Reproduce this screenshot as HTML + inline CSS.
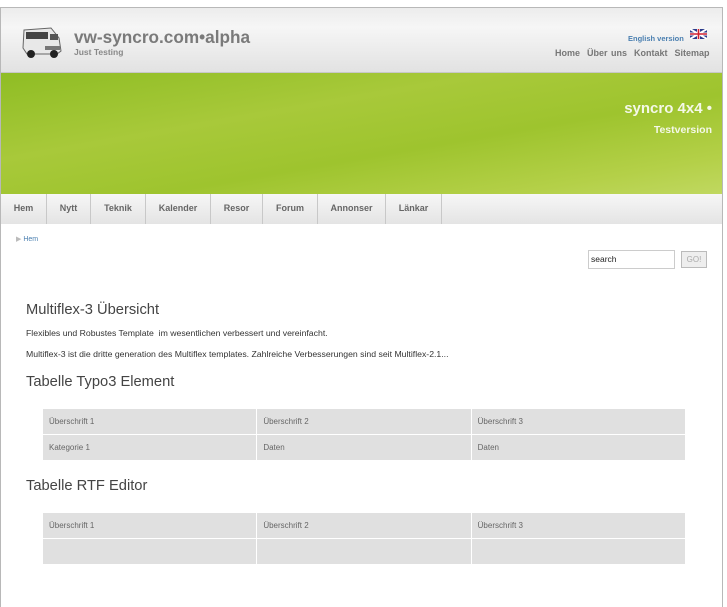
<!DOCTYPE html>
<html><head><meta charset="utf-8"><style>
*{margin:0;padding:0;box-sizing:border-box}
body{width:727px;height:545px;overflow:hidden;background:#fff;font-family:"Liberation Sans",sans-serif;position:relative}
#wrap{position:absolute;left:0;top:7px;width:723px;height:600px;border:1px solid #b8b8b8;border-bottom:none;background:#fff}
#hdr{position:absolute;left:0;top:0;width:721px;height:65px;background:linear-gradient(#ececec,#f6f6f6 30%,#e2e2e2);border-bottom:1px solid #c8c8c8}
.abs{position:absolute;white-space:nowrap}
#ban{position:absolute;left:0;top:65px;width:721px;height:121px;background:linear-gradient(170deg,#8fbd24 0%,#a8c93a 35%,#9ec42e 60%,#b4d048 85%,#c0d860 100%)}
#nav{position:absolute;left:0;top:186px;width:721px;height:30px;background:linear-gradient(#f6f6f6,#e4e4e4)}
#nav span{position:absolute;top:0;height:30px;line-height:28px;font-size:9px;font-weight:bold;color:#666;text-align:center;border-right:1px solid #c8c8c8}
td{background:#e0e0e0;font-size:8px;color:#666;height:26px;padding-left:6px;border:1px solid #fff}
table{position:absolute;left:41px;width:644px;border-collapse:collapse}
h2{position:absolute;left:25px;font-weight:normal;font-size:14.7px;color:#444;white-space:nowrap}
p{position:absolute;left:25px;font-size:8.7px;color:#333;white-space:nowrap}
</style></head><body>
<div id="wrap">
<div id="hdr">
 <svg class="abs" style="left:20px;top:18px" width="42" height="33" viewBox="0 0 42 33"><path d="M3 4 L30 2 L38 12 L40 25 L36 28 L6 28 L2 22 Z" fill="#e8e8e8" stroke="#666"/><rect x="5" y="6" width="22" height="7" fill="#444"/><rect x="29" y="8" width="8" height="6" fill="#555"/><circle cx="10" cy="28" r="4" fill="#222"/><circle cx="33" cy="28" r="4" fill="#222"/><rect x="24" y="20" width="15" height="4" fill="#777"/></svg>
 <div class="abs" style="left:73px;top:19px;font-size:17.2px;font-weight:bold;color:#7a7a7a">vw-syncro.com•alpha</div>
 <div class="abs" style="left:73px;top:39px;font-size:8.5px;font-weight:bold;color:#888">Just Testing</div>
 <div class="abs" style="left:627px;top:26px;font-size:7.5px;font-weight:bold;color:#4a7fb0">English version</div>
 <svg class="abs" style="left:689px;top:21px" width="17" height="10"><rect width="17" height="10" fill="#2a3a8a"/><path d="M0 0L17 10M17 0L0 10" stroke="#fff" stroke-width="2"/><path d="M8.5 0V10M0 5H17" stroke="#fff" stroke-width="3"/><path d="M8.5 0V10M0 5H17" stroke="#d02030" stroke-width="1.6"/></svg>
 <div class="abs" style="left:554px;top:40px;font-size:9px;font-weight:bold;color:#777;word-spacing:1px">Home&nbsp; Über uns&nbsp; Kontakt&nbsp; Sitemap</div>
</div>
<div id="ban">
 <div class="abs" style="right:10px;top:27px;font-size:15px;font-weight:bold;color:#f4f8e8">syncro 4x4 •</div>
 <div class="abs" style="right:10px;top:51px;font-size:10.5px;font-weight:bold;color:#f4f8e8">Testversion</div>
</div>
<div id="nav">
 <span style="left:0;width:46px">Hem</span><span style="left:46px;width:44px">Nytt</span><span style="left:90px;width:55px">Teknik</span><span style="left:145px;width:65px">Kalender</span><span style="left:210px;width:52px">Resor</span><span style="left:262px;width:55px">Forum</span><span style="left:317px;width:68px">Annonser</span><span style="left:385px;width:56px">Länkar</span>
</div>
<div class="abs" style="left:15px;top:227px;font-size:7px;color:#4a7fb0"><span style="color:#bbb">▶</span> Hem</div>
<div class="abs" style="left:587px;top:242px;width:87px;height:19px;border:1px solid #ccc;font-size:8.5px;padding:3px 2px;color:#222">search</div>
<div class="abs" style="left:680px;top:243px;width:26px;height:17px;border:1px solid #bbb;background:#eee;font-size:8px;color:#aaa;text-align:center;line-height:15px">GO!</div>
<h2 style="top:294px">Multiflex-3 Übersicht</h2>
<p style="top:320px">Flexibles und Robustes Template&nbsp; im wesentlichen verbessert und vereinfacht.</p>
<p style="top:341px">Multiflex-3 ist die dritte generation des Multiflex templates. Zahlreiche Verbesserungen sind seit Multiflex-2.1...</p>
<h2 style="top:366px">Tabelle Typo3 Element</h2>
<table style="top:400px"><tr><td>Überschrift 1</td><td>Überschrift 2</td><td>Überschrift 3</td></tr><tr><td>Kategorie 1</td><td>Daten</td><td>Daten</td></tr></table>
<h2 style="top:470px">Tabelle RTF Editor</h2>
<table style="top:504px"><tr><td>Überschrift 1</td><td>Überschrift 2</td><td>Überschrift 3</td></tr><tr><td>&nbsp;</td><td></td><td></td></tr></table>
</div>
</body></html>
